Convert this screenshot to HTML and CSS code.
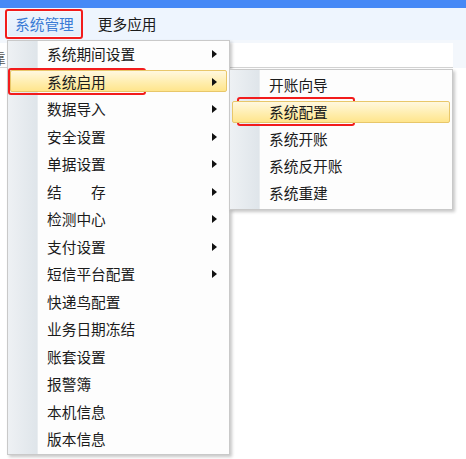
FILE: index.html
```html
<!DOCTYPE html>
<html lang="zh-CN">
<head>
  <meta charset="UTF-8" />
  <title>系统管理</title>
  <link rel="stylesheet" href="styles.css">
</head>
<body>

  <div class="topbar"></div>

  <div class="menubar">
    <div class="menu-item active">系统管理</div>
    <div class="menu-item">更多应用</div>
  </div>

  <div class="content">
    <div class="tabs">
      <span class="tab">靠</span>
    </div>
  </div>

  <!-- 下拉菜单 -->
  <ul class="dropdown main-menu">
    <li class="has-sub">系统期间设置</li>
    <li class="has-sub hover">系统启用</li>
    <li class="has-sub">数据导入</li>
    <li class="has-sub">安全设置</li>
    <li class="has-sub">单据设置</li>
    <li class="has-sub">结　　存</li>
    <li class="has-sub">检测中心</li>
    <li class="has-sub">支付设置</li>
    <li class="has-sub">短信平台配置</li>
    <li>快递鸟配置</li>
    <li>业务日期冻结</li>
    <li>账套设置</li>
    <li>报警簿</li>
    <li>本机信息</li>
    <li>版本信息</li>
  </ul>

  <ul class="dropdown sub-menu">
    <li>开账向导</li>
    <li class="hover">系统配置</li>
    <li>系统开账</li>
    <li>系统反开账</li>
    <li>系统重建</li>
  </ul>

  <!-- 红框标注 -->
  <div class="mark mark-1"></div>
  <div class="mark mark-2"></div>
  <div class="mark mark-3"></div>

</body>
</html>
```

FILE: styles.css
```css
* {
  box-sizing: border-box;
}

body {
  margin: 0;
  width: 466px;
  height: 459px;
  overflow: hidden;
  position: relative;
  background: #fff;
  font-family: "Noto Sans CJK SC", "Microsoft YaHei", sans-serif;
  font-size: 14.7px;
  color: #1b1b1b;
}

.topbar {
  height: 8px;
  background: #4689f6;
}

.menubar {
  height: 32px;
  background: #eef5fe;
  display: flex;
  align-items: center;
  padding-left: 7px;
}

.menu-item {
  height: 26px;
  line-height: 26px;
  padding: 0 8px 0 7px;
  margin-right: 8px;
}

.menu-item.active {
  color: #3a7bd5;
  background: linear-gradient(#eef5fd, #e3eefb);
  border: 1px solid #f7fbff;
  line-height: 24px;
}

.content {
  background: #f3f7fc;
  padding-top: 3px;
}

.tabs {
  height: 25px;
  background: #fff;
  border-bottom: 1px solid #d2d2d2;
  width: 453px;
  overflow: hidden;
}

.tab {
  display: inline-block;
  margin-left: -9px;
  margin-top: 4px;
  color: #555;
}

.dropdown {
  position: absolute;
  margin: 0;
  padding: 0;
  list-style: none;
  background: #fdfdfd;
  border: 1px solid #c9c9c9;
  box-shadow: 2px 2px 3px rgba(0, 0, 0, 0.22);
}

.dropdown::before {
  content: "";
  position: absolute;
  top: 0;
  bottom: 0;
  left: 0;
  width: 29px;
  background: linear-gradient(to right, #eef1f4, #dfe5ea);
  border-right: 1px solid #e9edf0;
}

.dropdown li {
  position: relative;
  padding-left: 39px;
}

.main-menu {
  left: 7px;
  top: 40px;
  width: 223px;
}

.main-menu li {
  height: 27.5px;
  line-height: 26px;
}

.sub-menu {
  left: 229px;
  top: 69px;
  width: 224px;
  padding: 2px 0;
}

.sub-menu li {
  height: 27px;
  line-height: 26px;
}

.dropdown li.hover::before {
  content: "";
  position: absolute;
  left: 2px;
  right: 2px;
  top: 1px;
  bottom: 4px;
  border: 1px solid #e8c76a;
  border-radius: 2px;
  background: linear-gradient(#fff8df, #ffeeb0 55%, #ffe58c);
}

.sub-menu li.hover::before {
  top: 2px;
  bottom: 3px;
}

.dropdown li span,
.dropdown li {
  z-index: 1;
}

.has-sub::after {
  content: "";
  position: absolute;
  right: 12px;
  top: 9px;
  border-left: 5px solid #111;
  border-top: 4px solid transparent;
  border-bottom: 4px solid transparent;
}

.main-menu li,
.sub-menu li {
  isolation: isolate;
}

.dropdown li.hover::before {
  z-index: -1;
}

.mark {
  position: absolute;
  border: 2.5px solid #f21c1c;
  border-radius: 3px;
}

.mark-1 {
  left: 5px;
  top: 9px;
  width: 78px;
  height: 30px;
}

.mark-2 {
  left: 8px;
  top: 68px;
  width: 138px;
  height: 27px;
}

.mark-3 {
  left: 237px;
  top: 97px;
  width: 118px;
  height: 29px;
}
```
